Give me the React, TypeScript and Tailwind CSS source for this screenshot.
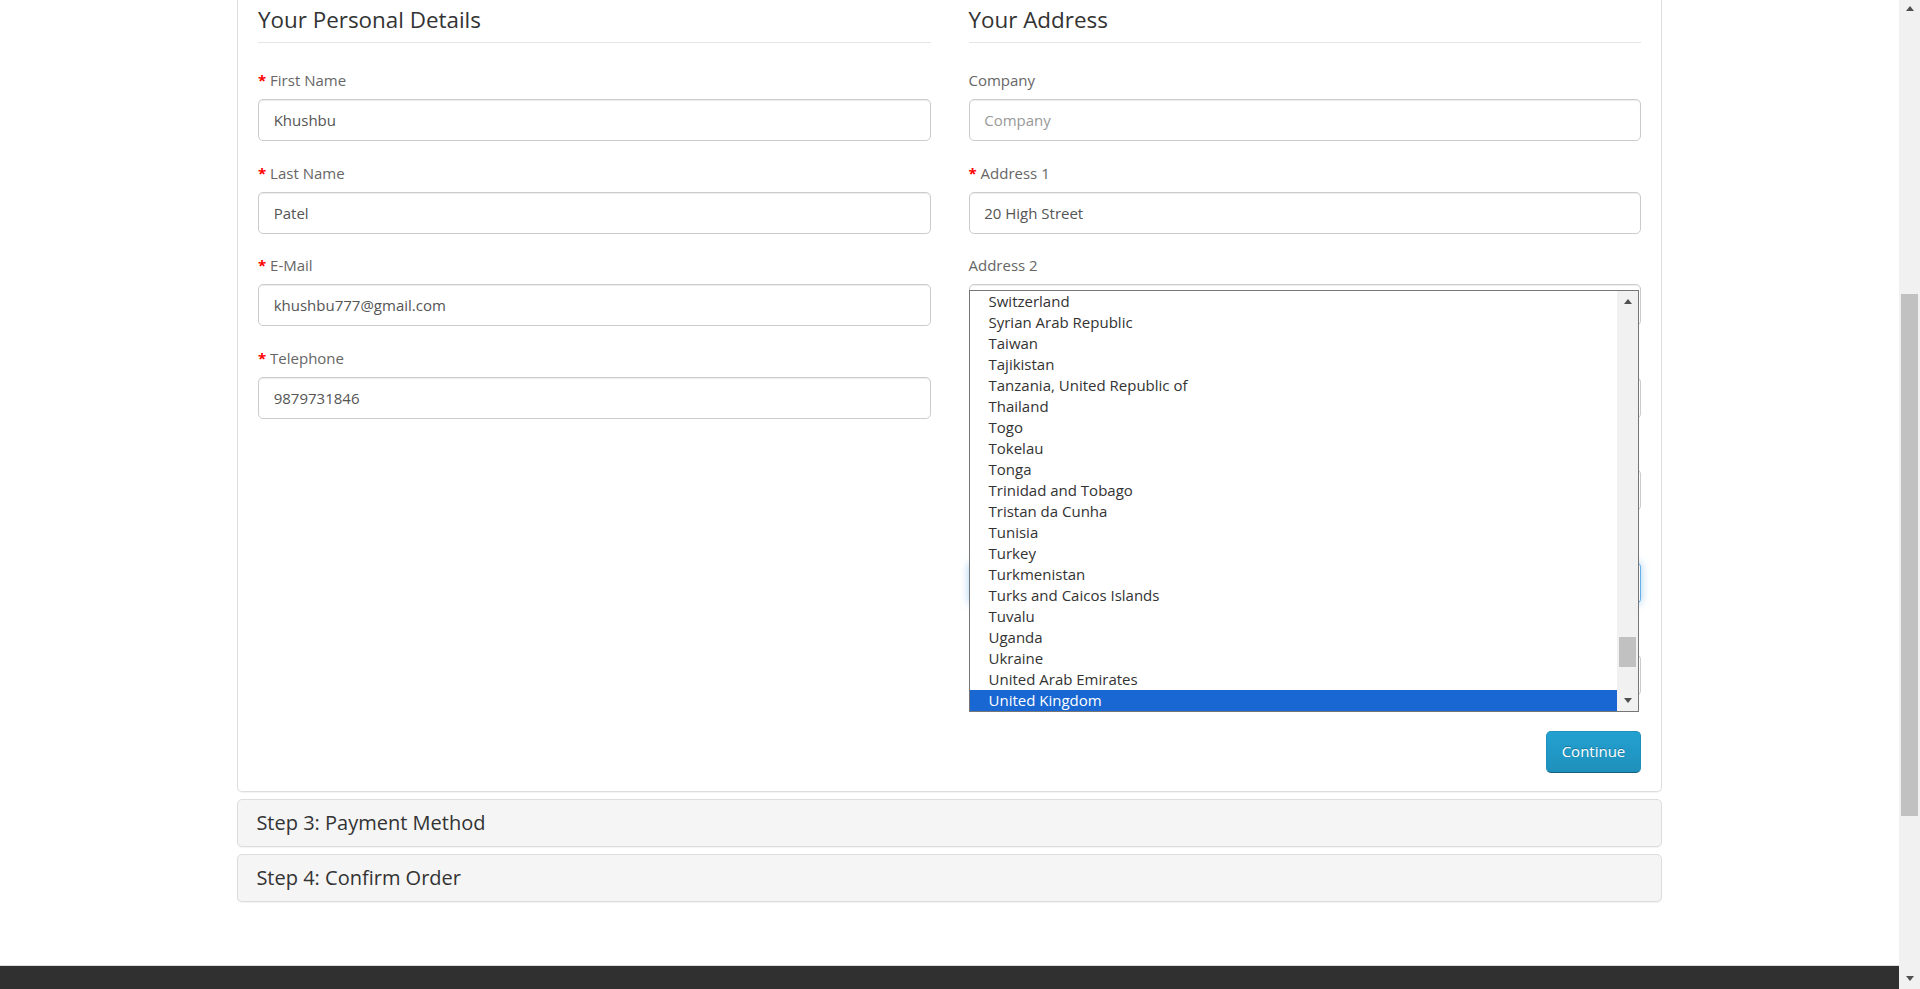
import React from 'react'

const personal = [
    { label: 'First Name', value: 'Khushbu', required: true },
    { label: 'Last Name', value: 'Patel', required: true },
    { label: 'E-Mail', value: 'khushbu777@gmail.com', required: true },
    { label: 'Telephone', value: '9879731846', required: true },
]

const countries = [
    'Switzerland',
    'Syrian Arab Republic',
    'Taiwan',
    'Tajikistan',
    'Tanzania, United Republic of',
    'Thailand',
    'Togo',
    'Tokelau',
    'Tonga',
    'Trinidad and Tobago',
    'Tristan da Cunha',
    'Tunisia',
    'Turkey',
    'Turkmenistan',
    'Turks and Caicos Islands',
    'Tuvalu',
    'Uganda',
    'Ukraine',
    'United Arab Emirates',
    'United Kingdom',
]

const inputBase =
    'block h-[42px] w-full rounded-[5px] border bg-white px-[14.7px] text-[15px] text-[#555] outline-none placeholder:text-[#999]'

function Field({ label, required, children }: { label?: string; required?: boolean; children: React.ReactNode }) {
    return (
        <div>
            <label className="mb-[8px] block h-[21px] text-[15px] leading-[21px] text-[#666]">
                {required && <span className="font-bold text-[#f00]">* </span>}
                {label}
            </label>
            {children}
        </div>
    )
}

function Input({ value, placeholder, focus, name }: { value?: string; placeholder?: string; focus?: boolean; name?: string }) {
    return (
        <input
            defaultValue={value}
            placeholder={placeholder}
            aria-label={name}
            className={
                inputBase +
                (focus
                    ? ' border-[#66afe9] shadow-[inset_0_1px_1px_rgba(0,0,0,0.075),0_0_8px_rgba(102,175,233,0.6)]'
                    : ' border-[#ccc] shadow-[inset_0_1px_1px_rgba(0,0,0,0.075)]')
            }
        />
    )
}

function Arrow({ up }: { up?: boolean }) {
    return up ? (
        <span className="h-0 w-0 border-x-[4.5px] border-b-[5px] border-x-transparent border-b-[#505050]" />
    ) : (
        <span className="h-0 w-0 border-x-[4.5px] border-t-[5px] border-x-transparent border-t-[#505050]" />
    )
}

function CountryList() {
    return (
        <div className="absolute left-0 top-[6.4px] z-10 flex h-[422px] w-[calc(100%-2px)] border border-[#767676] bg-white">
            <ul className="flex-1">
                {countries.map((c) => (
                    <li
                        key={c}
                        className={
                            c === 'United Kingdom'
                                ? 'h-[21px] bg-[#1967d2] pl-[19px] text-[15px] leading-[21px] text-white'
                                : 'h-[21px] pl-[19px] text-[15px] leading-[21px] text-[#333]'
                        }
                    >
                        {c}
                    </li>
                ))}
            </ul>
            {/* list scrollbar */}
            <div className="flex w-[21px] flex-col items-center bg-[#f1f1f1]">
                <div className="flex h-[21px] items-center">
                    <Arrow up />
                </div>
                <div className="mt-[325px] h-[30px] w-[17px] bg-[#c1c1c1]" />
                <div className="flex-1" />
                <div className="flex h-[21px] items-center">
                    <Arrow />
                </div>
            </div>
        </div>
    )
}

export default function App() {
    return (
        <div className="flex h-[989px] overflow-hidden bg-white font-['Open_Sans',sans-serif]">
            <div className="flex flex-1 flex-col">
                <div className="mx-auto w-[1425px]">
                    {/* Step 2 panel */}
                    <div className="rounded-b-[5px] border-x border-b border-[#ddd] px-[20px] pb-[18px] shadow-[0_1px_1px_rgba(0,0,0,0.05)]">
                        <div className="grid grid-cols-2 gap-x-[38px]">
                            {/* Personal details */}
                            <div>
                                <h2 className="border-b border-[#e5e5e5] pb-[7px] pt-[5px] text-[22.4px] leading-[30px] text-[#333]">
                                    Your Personal Details
                                </h2>
                                <div className="mt-[27px] flex flex-col gap-[21.5px]">
                                    {personal.map((f) => (
                                        <Field key={f.label} label={f.label} required={f.required}>
                                            <Input value={f.value} />
                                        </Field>
                                    ))}
                                </div>
                            </div>

                            {/* Address */}
                            <div>
                                <h2 className="border-b border-[#e5e5e5] pb-[7px] pt-[5px] text-[22.4px] leading-[30px] text-[#333]">
                                    Your Address
                                </h2>
                                <div className="mt-[27px] flex flex-col gap-[21.5px]">
                                    <Field label="Company">
                                        <Input placeholder="Company" />
                                    </Field>
                                    <Field label="Address 1" required>
                                        <Input value="20 High Street" />
                                    </Field>
                                    <Field label="Address 2">
                                        <div className="relative">
                                            <Input name="Address 2" />
                                            <CountryList />
                                        </div>
                                    </Field>
                                    {/* fields covered by the open country list */}
                                    <Field>
                                        <Input name="City" />
                                    </Field>
                                    <Field>
                                        <Input name="Post Code" />
                                    </Field>
                                    <Field>
                                        <Input name="Country" focus />
                                    </Field>
                                    <Field>
                                        <Input name="Region / State" />
                                    </Field>
                                </div>
                            </div>
                        </div>

                        <div className="mt-[34.7px] flex justify-end">
                            <button className="h-[42px] rounded-[5px] border border-[#1f90bb] border-b-[#145e7a] bg-gradient-to-b from-[#23a1d1] to-[#1f90bb] px-[14.7px] text-[15px] text-white [text-shadow:0_-1px_0_rgba(0,0,0,0.25)]">
                                Continue
                            </button>
                        </div>
                    </div>

                    {/* Collapsed steps */}
                    <div className="mt-[7px] rounded-[5px] border border-[#ddd] bg-[#f5f5f5] px-[18.4px] py-[12.2px] shadow-[0_1px_1px_rgba(0,0,0,0.05)]">
                        <h4 className="text-[20px] leading-[21.6px] text-[#333]">Step 3: Payment Method</h4>
                    </div>
                    <div className="mt-[7px] rounded-[5px] border border-[#ddd] bg-[#f5f5f5] px-[18.4px] py-[12.2px] shadow-[0_1px_1px_rgba(0,0,0,0.05)]">
                        <h4 className="text-[20px] leading-[21.6px] text-[#333]">Step 4: Confirm Order</h4>
                    </div>
                </div>

                {/* Footer */}
                <footer className="mt-[63px] flex-1 border-t border-[#ddd] bg-[#303030]" />
            </div>

            {/* Page scrollbar */}
            <div className="flex w-[21px] flex-col items-center bg-[#f1f1f1]">
                <div className="flex h-[17px] items-center">
                    <Arrow up />
                </div>
                <div className="mt-[277px] h-[522px] w-[17px] bg-[#c1c1c1]" />
                <div className="flex-1" />
                <div className="flex h-[21px] items-center">
                    <Arrow />
                </div>
            </div>
        </div>
    )
}
